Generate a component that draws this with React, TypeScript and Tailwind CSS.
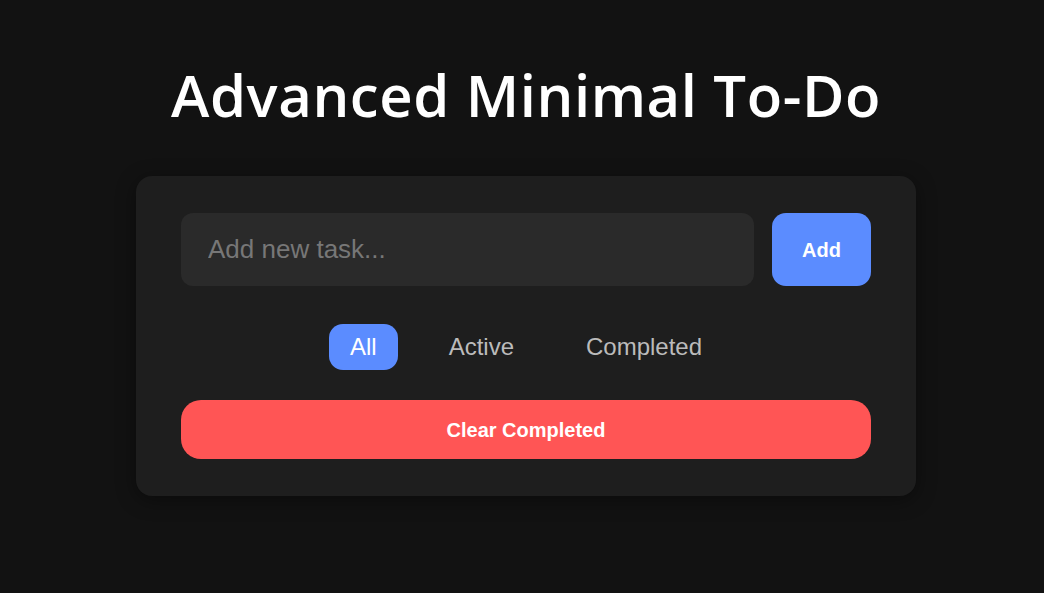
import React, { useState } from "react";

const filters = ["All", "Active", "Completed"];

export default function App() {
  const [filter, setFilter] = useState("All");
  const [text, setText] = useState("");

  return (
    <div className="min-h-[593px] w-full bg-[#121212] flex flex-col items-center pt-[60px] pl-[8px] font-['Liberation_Sans',Arial,sans-serif]">
      <h1 className="text-[58px] leading-[70px] font-semibold text-white font-['Open_Sans',sans-serif] tracking-[0.6px]">
        Advanced Minimal To-Do
      </h1>

      <div className="mt-[46px] w-[780px] rounded-[16px] bg-[#1e1e1e] px-[45px] py-[37px] shadow-[0_4px_20px_rgba(0,0,0,0.4)]">
        <div className="flex gap-[18px]">
          <input
            value={text}
            onChange={(e) => setText(e.target.value)}
            placeholder="Add new task..."
            className="flex-1 h-[73px] rounded-[12px] bg-[#2a2a2a] px-[27px] text-[26px] text-white placeholder:text-[#777777] outline-none"
          />
          <button className="w-[99px] h-[73px] rounded-[14px] bg-[#5b8cff] text-white text-[20px] font-bold">
            Add
          </button>
        </div>

        <div className="mt-[38px] flex justify-center gap-[30px]">
          {filters.map((f) => (
            <button
              key={f}
              onClick={() => setFilter(f)}
              className={
                filter === f
                  ? "h-[46px] px-[21px] rounded-[14px] bg-[#5b8cff] text-white text-[24px]"
                  : "h-[46px] px-[21px] rounded-[14px] text-[#bbbbbb] text-[24px]"
              }
            >
              {f}
            </button>
          ))}
        </div>

        <button className="mt-[30px] w-full h-[59px] rounded-[20px] bg-[#ff5555] text-white text-[20px] font-bold">
          Clear Completed
        </button>
      </div>
    </div>
  );
}
